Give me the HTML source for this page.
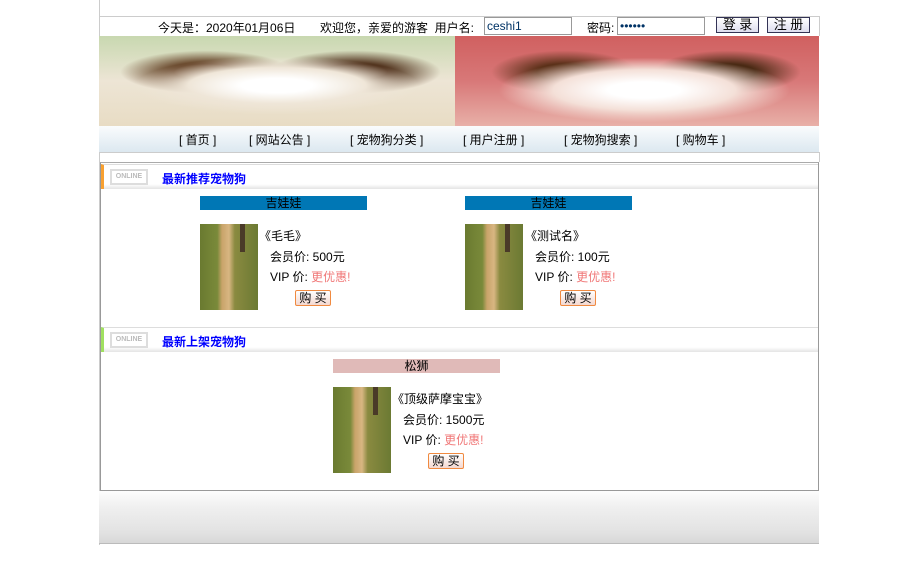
<!DOCTYPE html>
<html><head><meta charset="utf-8"><style>
*{margin:0;padding:0;box-sizing:border-box}
body{width:920px;height:569px;background:#fff;font-family:"Liberation Sans","Noto Sans CJK SC",sans-serif;font-size:12px;color:#000;position:relative;overflow:hidden}
.a{position:absolute}
.inp{position:absolute;height:18px;border:1px solid #999;background:#fff;font-size:12px;line-height:16px;padding-left:2px;color:#036}
.btn{position:absolute;height:16px;border:1px solid #335;background:linear-gradient(#fff,#dde);font-size:13px;text-align:center;line-height:14px}
.cat{position:absolute;height:14px;text-align:center;line-height:14px;font-size:12px}
.img{position:absolute;width:58px;height:86px;background:linear-gradient(90deg,#6a7a30 0,#7a8a3a 30%,#c9a46a 38%,#d8b682 50%,#8a8a40 60%,#6b7a33 100%)}
.img:after{content:"";position:absolute;left:40px;top:0;width:5px;height:28px;background:#4a3a28}
.buy{position:absolute;width:36px;height:16px;border:1px solid #f08a40;border-radius:2px;background:linear-gradient(#fff,#f4d8d0);font-size:12px;text-align:center;line-height:14px}
.t{position:absolute;font-size:12px;white-space:nowrap}
.pink{color:#f07878}
.sh{position:absolute;left:101px;width:717px;height:25px;border-top:1px solid #ddd;background:linear-gradient(#fff 80%,#e4e4e4)}
.sh b{position:absolute;left:58px;top:5px;color:#00f;font-size:12px}
.logo{position:absolute;left:6px;top:4px;width:38px;height:16px;border:2px solid #ddd;color:#bbb;font-size:7px;line-height:12px;text-align:center;font-weight:bold}
</style></head><body>
<div class="a" style="left:99px;top:0;width:1px;height:545px;background:#ccc"></div>
<div class="a" style="left:99px;top:16px;width:721px;height:1px;background:#ccc"></div>
<div class="a" style="left:819px;top:16px;width:1px;height:20px;background:#ccc"></div>
<div class="t" style="left:158px;top:19px">今天是：2020年01月06日</div>
<div class="t" style="left:320px;top:19px">欢迎您，亲爱的游客 &nbsp;用户名:</div>
<div class="inp" style="left:484px;top:17px;width:88px">ceshi1</div>
<div class="t" style="left:587px;top:19px">密码:</div>
<div class="inp" style="left:617px;top:17px;width:88px">••••••</div>
<div class="btn" style="left:716px;top:17px;width:43px">登 录</div>
<div class="btn" style="left:767px;top:17px;width:43px">注 册</div>
<div class="a" style="left:99px;top:36px;width:356px;height:90px;background:radial-gradient(ellipse 50% 40% at 50% 55%,#fff 20%,#efe6d8 50%,rgba(0,0,0,0) 80%),radial-gradient(ellipse 30% 30% at 30% 40%,#5a3518 30%,rgba(0,0,0,0) 80%),radial-gradient(ellipse 30% 30% at 72% 40%,#4a2a14 30%,rgba(0,0,0,0) 80%),linear-gradient(#c8d8b0,#ede5d5 50%,#e8dcc4)"></div>
<div class="a" style="left:455px;top:36px;width:364px;height:90px;background:radial-gradient(ellipse 50% 45% at 52% 60%,#fff 20%,#f4e0d8 50%,rgba(0,0,0,0) 80%),radial-gradient(ellipse 25% 30% at 30% 40%,#5a3018 30%,rgba(0,0,0,0) 80%),radial-gradient(ellipse 25% 30% at 75% 40%,#4a2a14 30%,rgba(0,0,0,0) 80%),linear-gradient(#d06060,#d87878 50%,#e8b0a8)"></div>
<div class="a" style="left:99px;top:126px;width:720px;height:26px;background:linear-gradient(#fafcfd,#dce8f0)"></div>
<div class="t" style="left:179px;top:131px">[ 首页 ]</div>
<div class="t" style="left:249px;top:131px">[ 网站公告 ]</div>
<div class="t" style="left:350px;top:131px">[ 宠物狗分类 ]</div>
<div class="t" style="left:463px;top:131px">[ 用户注册 ]</div>
<div class="t" style="left:564px;top:131px">[ 宠物狗搜索 ]</div>
<div class="t" style="left:676px;top:131px">[ 购物车 ]</div>
<div class="a" style="left:99px;top:152px;width:720px;height:1px;background:#ccc"></div>
<div class="a" style="left:819px;top:152px;width:1px;height:10px;background:#ccc"></div>
<div class="a" style="left:100px;top:162px;width:719px;height:329px;border:1px solid #999;border-top:1px solid #aaa"></div>
<div class="sh" style="top:164px;border-left:3px solid #f8a030"><div class="logo">ONLINE</div><b>最新推荐宠物狗</b></div>
<div class="cat" style="left:200px;top:196px;width:167px;background:#0077b5">吉娃娃</div>
<div class="img" style="left:200px;top:224px"></div>
<div class="t" style="left:259px;top:227px">《毛毛》</div>
<div class="t" style="left:270px;top:248px">会员价: 500元</div>
<div class="t" style="left:270px;top:268px">VIP 价: <span class="pink">更优惠!</span></div>
<div class="buy" style="left:295px;top:290px">购 买</div>
<div class="cat" style="left:465px;top:196px;width:167px;background:#0077b5">吉娃娃</div>
<div class="img" style="left:465px;top:224px"></div>
<div class="t" style="left:525px;top:227px">《测试名》</div>
<div class="t" style="left:535px;top:248px">会员价: 100元</div>
<div class="t" style="left:535px;top:268px">VIP 价: <span class="pink">更优惠!</span></div>
<div class="buy" style="left:560px;top:290px">购 买</div>
<div class="sh" style="top:327px;border-left:3px solid #a0e060"><div class="logo">ONLINE</div><b>最新上架宠物狗</b></div>
<div class="cat" style="left:333px;top:359px;width:167px;background:#e0bab8">松狮</div>
<div class="img" style="left:333px;top:387px"></div>
<div class="t" style="left:392px;top:390px">《顶级萨摩宝宝》</div>
<div class="t" style="left:403px;top:411px">会员价: 1500元</div>
<div class="t" style="left:403px;top:431px">VIP 价: <span class="pink">更优惠!</span></div>
<div class="buy" style="left:428px;top:453px">购 买</div>
<div class="a" style="left:99px;top:491px;width:720px;height:53px;background:linear-gradient(#fdfdfd,#f0f0f0 30%,#e2e2e2 80%,#d8d8d8);border-bottom:1px solid #bbb"></div>
</body></html>
